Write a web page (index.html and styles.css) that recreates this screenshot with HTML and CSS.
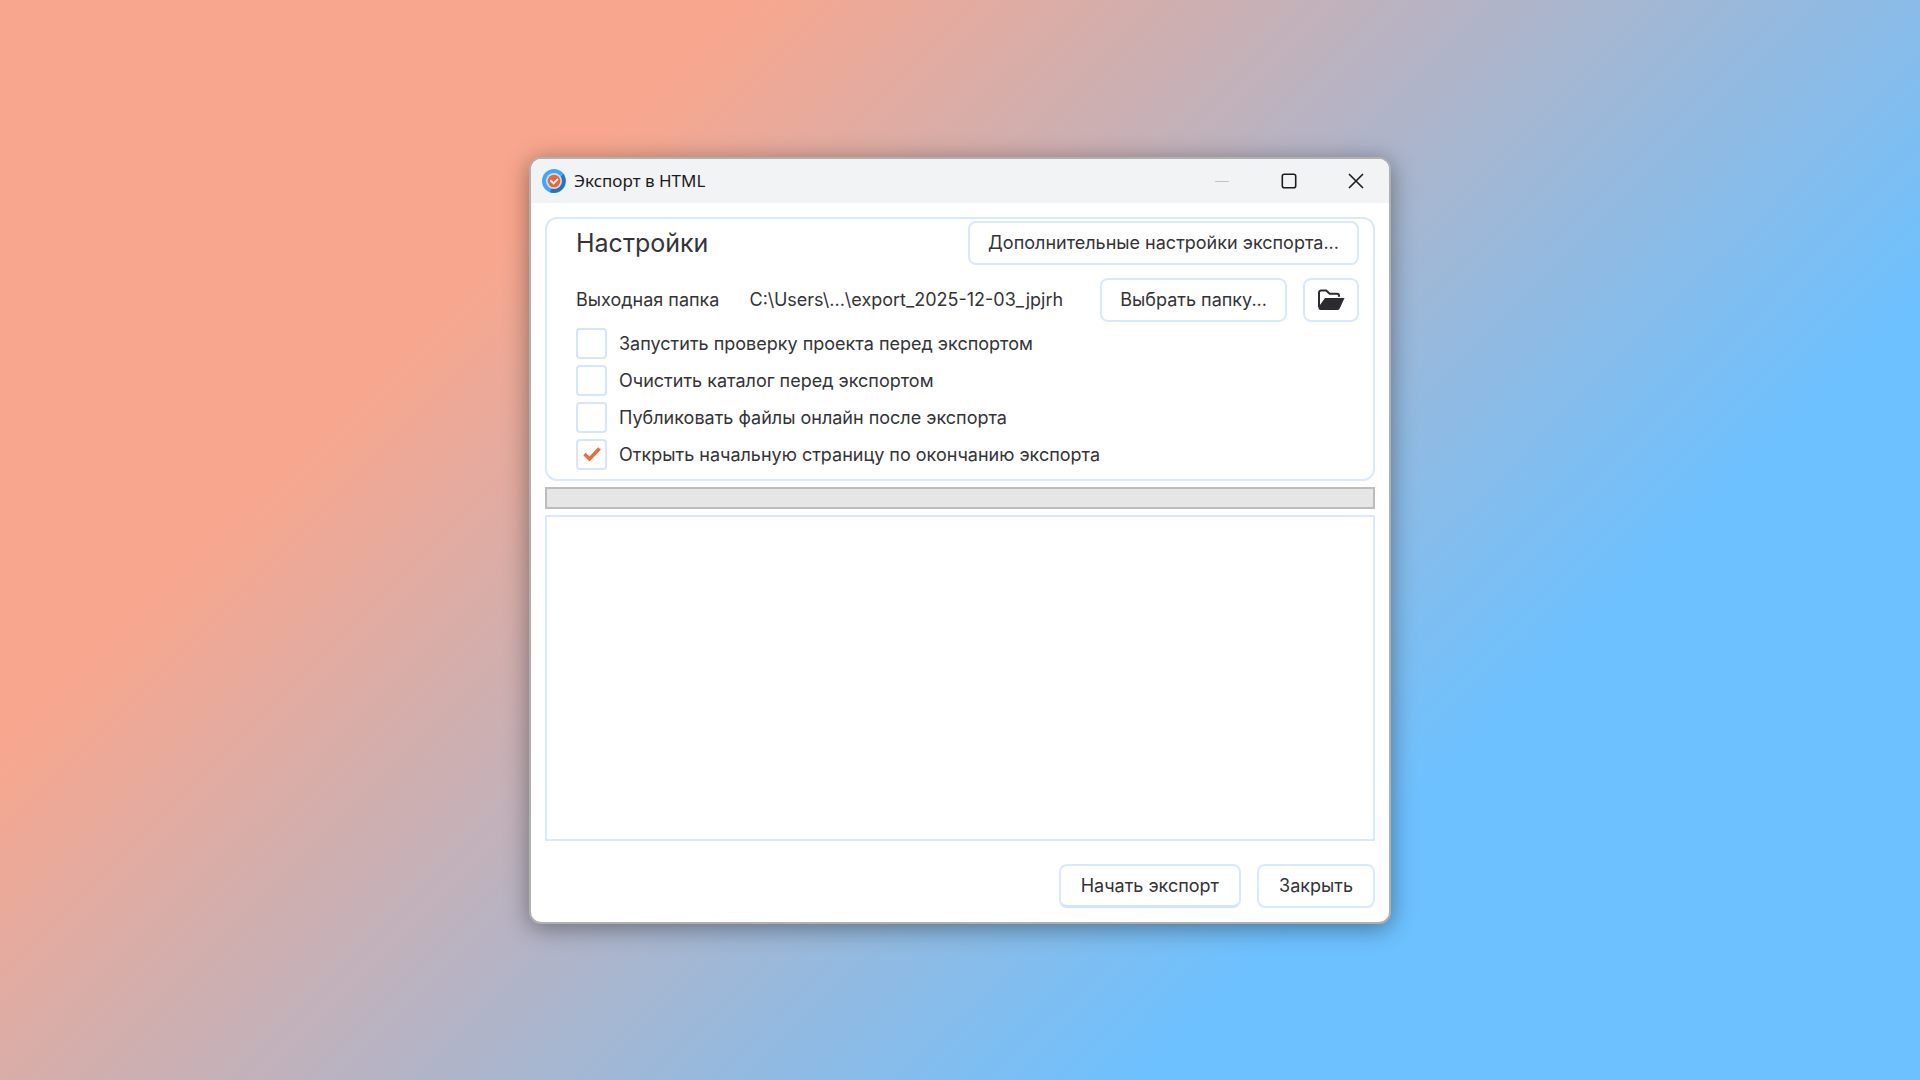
FILE: index.html
```html
<!DOCTYPE html>
<html lang="ru">
<head>
  <meta charset="utf-8">
  <title>Экспорт в HTML</title>
  <link rel="stylesheet" href="styles.css">
</head>
<body>
  <main class="window">
    <header class="titlebar">
      <svg class="app-icon" viewBox="0 0 24 24" aria-hidden="true">
        <circle cx="12" cy="12" r="12" fill="#3ba9fb"/>
        <path d="M21.500 5A12 12 0 0 1 8 23.200L10 18l8-9z" fill="#2673c0"/>
        <circle cx="12" cy="12" r="8" fill="#d3dbe4"/>
        <circle cx="12" cy="12" r="6.300" fill="#ee6338"/>
        <path d="M8.300 11.200l3.200 3.200 4.500-4.500" fill="none" stroke="#fff" stroke-width="2"/>
      </svg>
      <h1 class="title">Экспорт в HTML</h1>
      <div class="controls">
        <button class="control" type="button" aria-label="Свернуть" disabled>
          <svg viewBox="0 0 16 16"><path d="M1 8.500h14" stroke="#c0c1c3"/></svg>
        </button>
        <button class="control" type="button" aria-label="Развернуть">
          <svg viewBox="0 0 16 16"><rect x="1.300" y="1.300" width="13.400" height="13.400" rx="2" fill="none" stroke="#1b1b1b" stroke-width="1.600"/></svg>
        </button>
        <button class="control" type="button" aria-label="Закрыть окно">
          <svg viewBox="0 0 16 16"><path d="M1 1l14 14M15 1L1 15" stroke="#1b1b1b" stroke-width="1.600"/></svg>
        </button>
      </div>
    </header>

    <form class="content">
      <section class="settings">
        <div class="row">
          <h2 class="heading">Настройки</h2>
          <button class="btn" type="button">Дополнительные настройки экспорта...</button>
        </div>
        <div class="row folder-row">
          <span class="folder-label">Выходная папка</span>
          <span class="folder-path">C:\Users\...\export_2025-12-03_jpjrh</span>
          <button class="btn" type="button">Выбрать папку...</button>
          <button class="btn btn-icon" type="button" aria-label="Открыть папку">
            <svg viewBox="0 0 27 22">
              <path d="M1.500 18V3.500a2 2 0 0 1 2-2h5.200l3.500 3.300h7.300a2 2 0 0 1 2 2v1" fill="none" stroke="#2b2b30" stroke-width="2"/>
              <path d="M7.500 9H27l-4.800 10.500a2.500 2.500 0 0 1-2.300 1.500H3a2 2 0 0 1-2-2v-1z" fill="#2b2b30"/>
            </svg>
          </button>
        </div>
        <div class="options">
          <label class="option"><input class="check" type="checkbox">Запустить проверку проекта перед экспортом</label>
          <label class="option"><input class="check" type="checkbox">Очистить каталог перед экспортом</label>
          <label class="option"><input class="check" type="checkbox">Публиковать файлы онлайн после экспорта</label>
          <label class="option"><input class="check" type="checkbox" checked>Открыть начальную страницу по окончанию экспорта</label>
        </div>
      </section>

      <progress class="progress" value="0" max="100" aria-label="Ход экспорта"></progress>
      <textarea class="log" aria-label="Журнал" readonly></textarea>

      <div class="actions">
        <button class="btn btn-default" type="button">Начать экспорт</button>
        <button class="btn" type="button">Закрыть</button>
      </div>
    </form>
  </main>
</body>
</html>
```

FILE: styles.css
```css
* {
    box-sizing: border-box;
}

body {
    margin: 0;
    min-height: 100vh;
    display: flex;
    align-items: center;
    justify-content: center;
    background: linear-gradient(135deg, #f8a78e 25%, #6dc1ff 74%);
    font-family: Inter, "Liberation Sans", sans-serif;
    font-size: 18px;
    color: #333338;
}

.window {
    width: 90%;
    max-width: 862px;
    border: 2px solid #b0b0b0;
    border-radius: 12px;
    background: #fff;
    box-shadow: 0 4px 24px rgba(0, 0, 0, 0.4);
    overflow: hidden;
}

.titlebar {
    display: flex;
    align-items: center;
    height: 44px;
    padding-left: 11px;
    background: #f2f3f5;
}

.app-icon {
    width: 24px;
    height: 24px;
}

.title {
    flex: 1;
    margin: 0 0 0 8px;
    font-family: "Noto Sans", "Open Sans", sans-serif;
    font-size: 17px;
    font-weight: 400;
    color: #1b1b1b;
}

.controls {
    display: flex;
}

.control {
    display: flex;
    align-items: center;
    justify-content: center;
    width: 67px;
    height: 44px;
    padding: 0;
    border: 0;
    background: none;
}

.control svg {
    width: 16px;
    height: 16px;
}

.content {
    display: flex;
    flex-direction: column;
    gap: 6px;
    padding: 14px;
}

.settings {
    padding: 2px 14px 9px 29px;
    border: 2px solid #dae8fc;
    border-radius: 12px;
}

.row {
    display: flex;
    align-items: center;
    justify-content: space-between;
}

.row .btn {
    padding: 0 18px;
}

.heading {
    margin: 0;
    font-size: 25px;
    font-weight: 400;
}

.folder-row {
    gap: 16px;
    margin-top: 13px;
}

.folder-label {
    margin-right: 14px;
}

.folder-path {
    flex: 1;
}

.btn {
    height: 44px;
    padding: 0 20px;
    border: 2px solid #dae8fc;
    border-radius: 8px;
    background: #fff;
    font: inherit;
    color: inherit;
}

.row .btn-icon {
    display: flex;
    align-items: center;
    width: 56px;
    padding: 0 12px;
}

.btn-icon svg {
    width: 28px;
    height: 22px;
}

.btn-default {
    border-bottom-width: 3px;
    border-bottom-color: #d2e3fc;
}

.options {
    display: grid;
    gap: 6px;
    margin-top: 6px;
}

.option {
    display: flex;
    align-items: center;
    gap: 12px;
}

.check {
    appearance: none;
    width: 31px;
    height: 31px;
    margin: 0;
    border: 2px solid #d6e5fc;
    border-radius: 4px;
    background: #fff;
}

.check:checked {
    background: url("data:image/svg+xml,%3Csvg xmlns='http://www.w3.org/2000/svg' viewBox='0 0 18 14'%3E%3Cpath d='M1.500 7l5 5L16.500 1.500' fill='none' stroke='%23f06a40' stroke-width='3.500'/%3E%3C/svg%3E") center / 18px 14px no-repeat;
}

.progress {
    appearance: none;
    width: 100%;
    height: 22px;
    border: 2px solid #bcbcbc;
    background: #e6e6e6;
}

.progress::-webkit-progress-bar {
    background: #e6e6e6;
}

.log {
    width: 100%;
    height: 326px;
    border: 2px solid #dae8fc;
    resize: none;
    outline: 0;
}

.actions {
    display: flex;
    justify-content: flex-end;
    gap: 16px;
    margin-top: 17px;
}
```
